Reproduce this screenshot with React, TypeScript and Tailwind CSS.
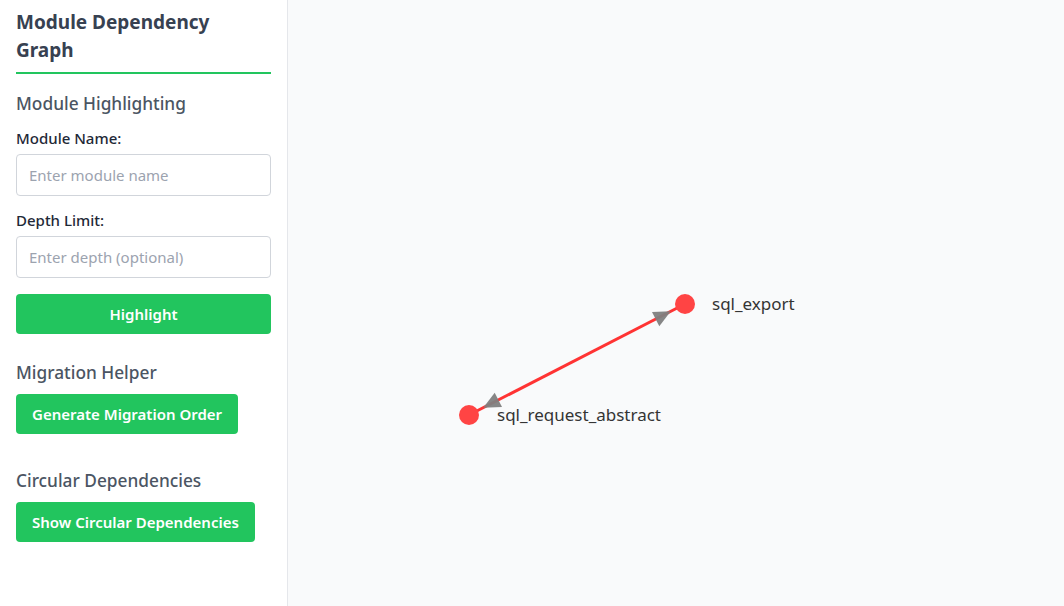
import React from "react";

const font = { fontFamily: '"Noto Sans", "Open Sans", sans-serif' };

const Graph = () => {
  // node positions on the canvas
  const a = { x: 397, y: 304 }; // sql_export
  const b = { x: 181, y: 415 }; // sql_request_abstract
  const dx = a.x - b.x;
  const dy = a.y - b.y;
  const len = Math.hypot(dx, dy);
  const ux = dx / len;
  const uy = dy / len;
  const nx = -uy;
  const ny = ux;

  const arrow = (tx: number, ty: number, dirx: number, diry: number) => {
    const L = 17;
    const W = 16;
    const bx = tx - dirx * L;
    const by = ty - diry * L;
    return `${tx},${ty} ${bx + nx * W / 2},${by + ny * W / 2} ${bx - nx * W / 2},${by - ny * W / 2}`;
  };

  return (
    <svg className="w-full h-full" width="776" height="606">
      <line x1={b.x} y1={b.y} x2={a.x} y2={a.y} stroke="#ff3333" strokeWidth="3" />
      <polygon points={arrow(a.x - ux * 16, a.y - uy * 16, ux, uy)} fill="#808080" fillOpacity="0.95" />
      <polygon points={arrow(b.x + ux * 16, b.y + uy * 16, -ux, -uy)} fill="#808080" fillOpacity="0.95" />
      <circle cx={a.x} cy={a.y} r="10" fill="#ff4444" />
      <circle cx={b.x} cy={b.y} r="10" fill="#ff4444" />
      <text x={a.x + 27} y={a.y + 6} fontSize="17" fill="#343434" style={font}>
        sql_export
      </text>
      <text x={b.x + 28} y={b.y + 6} fontSize="17" fill="#343434" style={font}>
        sql_request_abstract
      </text>
    </svg>
  );
};

export default function App() {
  return (
    <div className="flex w-[1064px] h-[606px] overflow-hidden" style={font}>
      <aside className="w-[288px] shrink-0 bg-white border-r border-[#e5e7eb] px-4 pt-2">
        <h1 className="text-[19px] font-bold text-[#374151] leading-7 pb-2 border-b-2 border-[#22c55e]">
          Module Dependency Graph
        </h1>

        <h2 className="mt-4 text-[17.3px] leading-7 font-medium text-[#4b5563]">Module Highlighting</h2>
        <label className="block mt-[10px] mb-1.5 text-[15px] leading-5 font-medium text-[#1f2937]">Module Name:</label>
        <input
          className="w-full h-[42px] px-3 text-[15px] border border-[#d1d5db] rounded placeholder-[#9ca3af]"
          placeholder="Enter module name"
        />
        <label className="block mt-3.5 mb-1.5 text-[15px] leading-5 font-medium text-[#1f2937]">Depth Limit:</label>
        <input
          className="w-full h-[42px] px-3 text-[15px] border border-[#d1d5db] rounded placeholder-[#9ca3af]"
          placeholder="Enter depth (optional)"
        />
        <button className="w-full h-10 mt-4 bg-[#22c55e] text-white text-[15px] font-semibold rounded">
          Highlight
        </button>

        <h2 className="mt-[25px] text-[17.3px] leading-7 font-medium text-[#4b5563]">Migration Helper</h2>
        <button className="h-10 mt-[7px] px-4 bg-[#22c55e] text-white text-[15px] font-semibold rounded">
          Generate Migration Order
        </button>

        <h2 className="mt-[33px] text-[17.3px] leading-7 font-medium text-[#4b5563]">Circular Dependencies</h2>
        <button className="h-10 mt-[7px] px-4 bg-[#22c55e] text-white text-[15px] font-semibold rounded">
          Show Circular Dependencies
        </button>
      </aside>
      <main className="flex-1 bg-[#f9fafb]">
        <Graph />
      </main>
    </div>
  );
}
